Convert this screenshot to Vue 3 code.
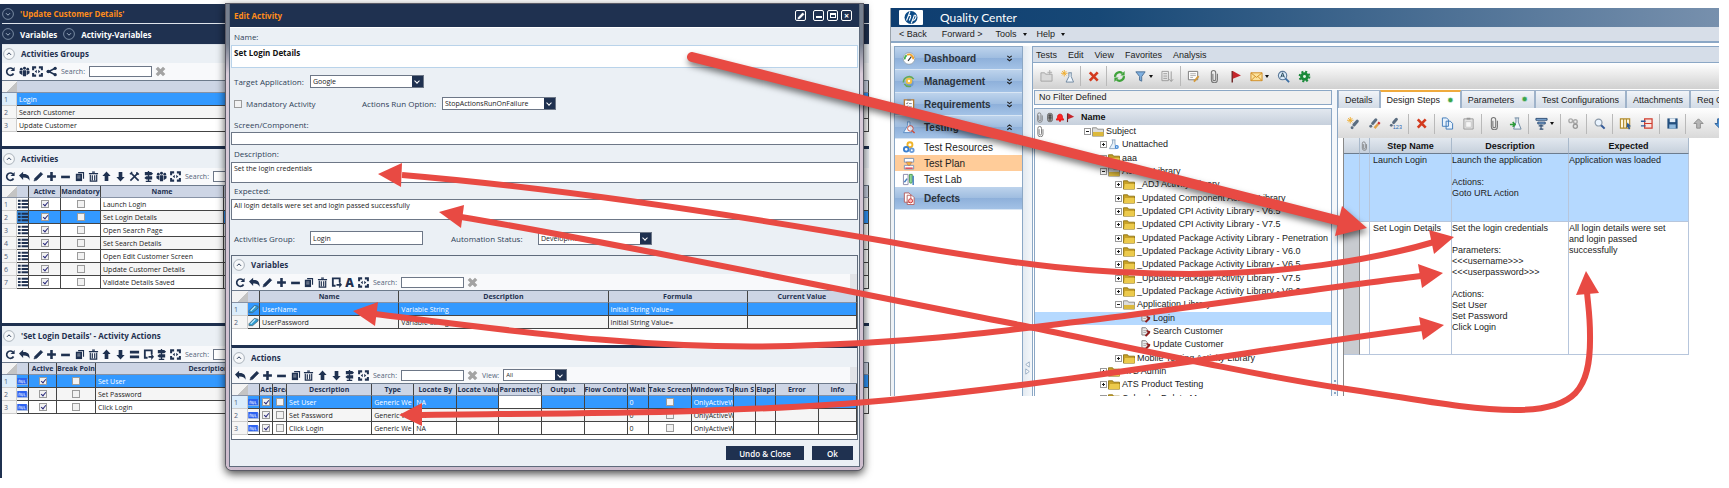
<script setup>
const groups = ['Login', 'Search Customer', 'Update Customer']
const activities = [
  'Launch Login', 'Set Login Details', 'Open Search Page', 'Set Search Details',
  'Open Edit Customer Screen', 'Update Customer Details', 'Validate Details Saved'
]
const steps = ['Set User', 'Set Password', 'Click Login']
const variables = ['UserName', 'UserPassword']

const groupTools = ['refresh', 'group', 'expand', 'share']
const activityTools = ['refresh', 'undo', 'pencil', 'plus', 'minus', 'copy', 'trash', 'up', 'down', 'tools', 'sign', 'group', 'expand']
const stepTools = ['refresh', 'undo', 'pencil', 'plus', 'minus', 'copy', 'trash', 'up', 'down', 'equals', 'export', 'sign', 'expand']
const variableTools = ['refresh', 'undo', 'pencil', 'plus', 'minus', 'copy', 'trash', 'export', 'letter', 'expand']
const actionTools = ['undo', 'pencil', 'plus', 'minus', 'copy', 'trash', 'up', 'down', 'sign', 'expand']

const variableCols = [16, 12, 139, 209, 139, 109]
const actionCols = [16, 12, 13, 14, 85, 42, 43, 42, 43, 42, 43, 21, 43, 42, 22, 20, 43, 38]
const actionHeads = ['Description', 'Type', 'Locate By', 'Locate Valu', 'Parameter(s', 'Output', 'Flow Contro', 'Wait', 'Take Screen', 'Windows To', 'Run S', 'Elaps', 'Error', 'Info']

const nav = [
  { name: 'Dashboard', icon: 'gauge', head: true, mark: 'down' },
  { name: 'Management', icon: 'manage', head: true, mark: 'down' },
  { name: 'Requirements', icon: 'clipboard', head: true, mark: 'down' },
  { name: 'Testing', icon: 'flask', head: true, mark: 'up' },
  { name: 'Test Resources', icon: 'resources' },
  { name: 'Test Plan', icon: 'plan', current: true },
  { name: 'Test Lab', icon: 'lab' },
  { name: 'Defects', icon: 'defects', head: true }
]

const tree = [
  { t: 'Subject', l: 0, open: true, clip: true },
  { t: 'Unattached', l: 1, icon: 'beaker' },
  { t: 'aaa', l: 1 },
  { t: 'Activity Library', l: 1, open: true },
  { t: '_ADJ Activity Library', l: 2 },
  { t: '_Updated Component Activity Library', l: 2 },
  { t: '_Updated CPI Activity Library - V6.5', l: 2 },
  { t: '_Updated CPI Activity Library - V7.5', l: 2 },
  { t: '_Updated Package Activity Library - Penetration', l: 2 },
  { t: '_Updated Package Activity Library - V6.0', l: 2 },
  { t: '_Updated Package Activity Library - V6.5', l: 2 },
  { t: '_Updated Package Activity Library - V7.5', l: 2 },
  { t: '_Updated Package Activity Library - V8.0', l: 2 },
  { t: 'Application Library', l: 2, open: true },
  { t: 'Login', l: 3, leaf: true, sel: true },
  { t: 'Search Customer', l: 3, leaf: true },
  { t: 'Update Customer', l: 3, leaf: true },
  { t: 'Mobile Testing Activity Library', l: 2 },
  { t: 'ATS Admin', l: 1 },
  { t: 'ATS Product Testing', l: 1 },
  { t: 'Calendar Delete Me', l: 1 }
]

const mainTools = ['newfolder', 'newtest', '|', 'cross', '|', 'sync', 'funnel', 'caret', 'sort', '|', 'note', 'clip', 'flag', 'mail', 'caret', 'find', 'gear']
const stepBar = ['stepnew', 'stepedit', 'steprenum', '|', 'cross', '|', 'pages', 'paste', '|', 'clip', 'addtest', '|', 'params', 'caret', '|', 'links', '|', 'lens', '|', 'columns', 'indent', '|', 'save', '|', 'arrowup', 'arrowdn']
const tabs = [
  { t: 'Details' }, { t: 'Design Steps', star: true, on: true }, { t: 'Parameters', star: true },
  { t: 'Test Configurations' }, { t: 'Attachments' }, { t: 'Req Coverage' }
]

const arrows = [
  { d: 'M402 175C545 187 700 209 890 242C1020 266 1100 274 1190 274S1370 261 1434 242', heads: ['378,174 402,163 401,187', '1454,237 1429,230 1434,254'] },
  { d: 'M375 314C520 332 650 350 790 346S1000 331 1100 319C1200 306 1330 287 1421 276', heads: ['353,311 378,302 375,326', '1443,273 1418,264 1422,288'] },
  { d: 'M461 217C600 240 800 282 1020 325C1150 352 1250 374 1340 388C1420 400 1470 410 1515 410C1575 410 1591 390 1590 335C1590 315 1588 305 1587 292', heads: ['439,212 464,205 461,228', '1586,271 1576,295 1599,293'] },
  { d: 'M421 415C560 413 740 414 890 400C1080 381 1250 351 1422 328', heads: ['399,415 422,403 422,426', '1444,325 1419,317 1423,340'] }
]
</script>

<template>
  <div class="page">
    <svg class="sprite" aria-hidden="true">
      <symbol id="refresh" viewBox="0 0 12 12"><path d="M9.3 8.2A4 4 0 1 1 8.6 3.3" fill="none" stroke="currentColor" stroke-width="1.8" /><path d="M10.5 1v4.5H6z" fill="currentColor" /></symbol>
      <symbol id="undo" viewBox="0 0 12 12"><path d="M0 5L4.500 .8v2.400C9 2.800 12 5 11.500 10.500 10.300 8 8 7 4.500 7.200v2.600z" fill="currentColor" /></symbol>
      <symbol id="pencil" viewBox="0 0 12 12"><path d="M1 11l1-3.2L8.5 1.3l2.200 2.200L4.200 10z" fill="currentColor" stroke="currentColor" stroke-width=".5" /></symbol>
      <symbol id="plus" viewBox="0 0 12 12"><path d="M6 1.2v9.600M1.200 6h9.600" stroke="currentColor" stroke-width="2.800" /></symbol>
      <symbol id="minus" viewBox="0 0 12 12"><path d="M1.200 6.500h9.600" stroke="currentColor" stroke-width="2.800" /></symbol>
      <symbol id="copy" viewBox="0 0 12 12"><path d="M4.5 1H11v7.5H9.800V2.500H4.500z" fill="currentColor" /><path d="M2 3h6.800v8H2z" fill="currentColor" /><path d="M3.500 5.500h3.500M3.500 7.500h3.500" stroke="#fff" stroke-width=".6" /></symbol>
      <symbol id="trash" viewBox="0 0 12 12"><path d="M1 2.800h10M4.500 1.200h3M2.500 4v7h7V4M4.700 4.500v5.500M7.300 4.500v5.500" fill="none" stroke="currentColor" stroke-width="1.300" /></symbol>
      <symbol id="up" viewBox="0 0 12 12"><path d="M6 .5l4.500 5H8V11H4V5.500H1.500z" fill="currentColor" /></symbol>
      <symbol id="down" viewBox="0 0 12 12"><path d="M6 11.500L1.500 6.500H4V1h4v5.500h2.500z" fill="currentColor" /></symbol>
      <symbol id="tools" viewBox="0 0 12 12"><path d="M2 2l8.500 8.500M10 2l-8.500 8.500" stroke="currentColor" stroke-width="1.700" /><path d="M1 3.500L3.500 1M8.500 1v2.500H11" fill="none" stroke="currentColor" stroke-width="1.300" /></symbol>
      <symbol id="sign" viewBox="0 0 12 12"><path d="M6 0v12" stroke="currentColor" stroke-width="1.500" /><path d="M2 1.200h7l2 1.700-2 1.700H2zM10 5.800H3.500l-2 1.700 2 1.700H10zM3 10.500h6V12H3z" fill="currentColor" /></symbol>
      <symbol id="group" viewBox="0 0 12 12"><circle cx="6" cy="2.500" r="1.600" fill="currentColor" /><circle cx="2.500" cy="3.500" r="1.500" fill="currentColor" /><circle cx="9.500" cy="3.500" r="1.500" fill="currentColor" /><path d="M4.300 4.500h3.400v6.800H4.300zM.5 5.200h3.200V10L.5 8zM11.500 5.200H8.300V10l3.200-2z" fill="currentColor" /></symbol>
      <symbol id="expand" viewBox="0 0 12 12"><path d="M1.200 4.500V1.500h3.300M7.500 1.500h3.300v3M10.800 7.500v3H7.500M4.500 10.500H1.200v-3" fill="none" stroke="currentColor" stroke-width="2.200" /><path d="M3 6l2.200-2v4zM9 6L6.800 4v4z" fill="currentColor" /></symbol>
      <symbol id="share" viewBox="0 0 12 12"><path d="M10 2.500L3 6l7 3.500" fill="none" stroke="currentColor" stroke-width="1.700" /><circle cx="10" cy="2.500" r="1.800" fill="currentColor" /><circle cx="2.500" cy="6" r="2" fill="currentColor" /><circle cx="10" cy="9.500" r="1.800" fill="currentColor" /></symbol>
      <symbol id="equals" viewBox="0 0 12 12"><path d="M1 3.500h10M1 8.500h10" stroke="currentColor" stroke-width="3" /></symbol>
      <symbol id="export" viewBox="0 0 12 12"><path d="M5 9.500H2v-8h7.500V6" fill="none" stroke="currentColor" stroke-width="2" /><path d="M6 7.500h3V5l3 3.500L9 12V9.500H6z" fill="currentColor" /></symbol>
      <symbol id="letter" viewBox="0 0 12 12"><text x="6" y="11" text-anchor="middle" font-size="13" font-weight="900" fill="currentColor">A</text></symbol>
      <symbol id="wipe" viewBox="0 0 12 12"><path d="M2 2l8 8M10 2l-8 8" stroke="#a3a3a3" stroke-width="3.600" /></symbol>
      <symbol id="chev" viewBox="0 0 12 12"><circle cx="6" cy="6" r="5.400" fill="none" stroke="currentColor" stroke-width=".7" /><path d="M4 5.200l2 2 2-2" fill="none" stroke="currentColor" /></symbol>
      <symbol id="chevup" viewBox="0 0 12 12"><circle cx="6" cy="6" r="5.400" fill="#f6f8fa" stroke="#9aa3ad" stroke-width=".8" /><path d="M4 6.800l2-2 2 2" fill="none" stroke="#1f3150" /></symbol>
      <symbol id="list" viewBox="0 0 12 10"><path d="M1 1.500h3M5 1.500h7M1 5h3M5 5h7M1 8.500h3M5 8.500h7" stroke="#1f3150" stroke-width="2.200" /></symbol>
      <symbol id="tag" viewBox="0 0 12 10"><path d="M1 7l6-6 4 1v2L5 9H1z" fill="#2f9bd0" stroke="#4a5a66" stroke-width=".7" /><path d="M3 7l5-5" stroke="#c8efff" stroke-width="1.200" /></symbol>
      <symbol id="abl" viewBox="0 0 12 8"><path d="M0 0h11v7H0z" fill="#2d62f0" /><path d="M2 5.500V2.500h1.500v3M5 2.500v3h1.500v-3M8 2.500v3h1.500" fill="none" stroke="#dfe8ff" stroke-width=".8" /><path d="M0 7.500h12V1" fill="none" stroke="#9ab0dd" /></symbol>

      <symbol id="gauge" viewBox="0 0 14 14"><circle cx="7" cy="7" r="6.300" fill="#fff" stroke="#94a2ae" /><path d="M2.500 8a4.500 4.500 0 0 1 2-4.500" fill="none" stroke="#41ad4a" stroke-width="1.800" /><path d="M5 3.200a4.500 4.500 0 0 1 6.500 4.600" fill="none" stroke="#f0a22a" stroke-width="1.800" /><path d="M6 9.500L9.500 5" stroke="#333" stroke-width="1.200" /></symbol>
      <symbol id="manage" viewBox="0 0 14 14"><circle cx="8" cy="8.500" r="4" fill="#6f9bd0" /><circle cx="7" cy="6.500" r="3.500" fill="#f4c043" /><path d="M1 8a6 6 0 0 1 11-3.500M2 9.500a6 6 0 0 0 7 2.500" fill="none" stroke="#65a955" stroke-width="1.700" /><circle cx="7" cy="6.500" r="1.300" fill="#fff" /></symbol>
      <symbol id="clipboard" viewBox="0 0 14 14"><path d="M2 2h10v11.500H2z" fill="#fff" stroke="#b77b32" stroke-width="1.400" /><path d="M5 1h4v2H5z" fill="#888" /><path d="M4 5.500l1 1 1-2M7 6h3M4 9l1 1 1-2M7 9.500h3" fill="none" stroke="#667" stroke-width=".8" /></symbol>
      <symbol id="flask" viewBox="0 0 14 14"><path d="M5 1h3M5.500 1v4L1 12.500h9L8 5V1" fill="#e9f4ff" stroke="#5b8cc4" /><circle cx="8.500" cy="8" r="3" fill="#fff" fill-opacity=".7" stroke="#cc4a3a" /><path d="M10.500 10.500l2.500 2.500" stroke="#cc4a3a" stroke-width="1.500" /></symbol>
      <symbol id="resources" viewBox="0 0 14 14"><circle cx="8" cy="4" r="2.700" fill="none" stroke="#f0b429" stroke-width="2" /><circle cx="4" cy="9" r="2.500" fill="none" stroke="#3a7fd0" stroke-width="2" /><circle cx="10" cy="10" r="2" fill="none" stroke="#6a9bd8" stroke-width="2" /></symbol>
      <symbol id="plan" viewBox="0 0 14 14"><path d="M2 1.500h10v4H2zM2 9h10v4H2z" fill="#fff" stroke="#7a93b5" /><path d="M4 5.500h6L8 9H6z" fill="#f2b63c" stroke="#a66" stroke-width=".6" /><path d="M3 12h8" stroke="#d34" stroke-width="1.400" /></symbol>
      <symbol id="lab" viewBox="0 0 14 14"><path d="M1 1.500h5v11H1z" fill="#fff" stroke="#88a" /><path d="M7.500 1.500h3v8a1.500 1.500 0 0 1-3 0z" fill="#8fd694" stroke="#4a9b52" /><path d="M2 10l3-4M11.500 3v10" stroke="#477fc2" stroke-width="1.600" /></symbol>
      <symbol id="defects" viewBox="0 0 14 14"><path d="M2 1h5l2 2v8H2zM5 3.500h5l2.500 2.500v7.500H5z" fill="#fff" stroke="#b65f5f" /><circle cx="8.700" cy="9.500" r="2.200" fill="#fbb" stroke="#c33" /></symbol>
      <symbol id="ddown" viewBox="0 0 8 8"><path d="M1.500 1l2.500 2 2.500-2M1.500 4.500l2.500 2 2.500-2" fill="none" stroke="#222" stroke-width="1.300" /></symbol>
      <symbol id="dup" viewBox="0 0 8 8"><path d="M1.500 3l2.500-2 2.500 2M1.500 6.500l2.500-2 2.500 2" fill="none" stroke="#222" stroke-width="1.300" /></symbol>

      <symbol id="folder" viewBox="0 0 13 11"><path d="M.5 1.500h4.500l1 1.500h6.500v7.500H.5z" fill="#c9a227" stroke="#8f7415" /><path d="M2 5h10.500v5.500H1z" fill="#ecca4c" /></symbol>
      <symbol id="openfolder" viewBox="0 0 13 11"><path d="M.5 1.500h4.500l1 1.500h6.500v7.500H.5z" fill="#ddd" stroke="#8a8a86" /><path d="M1 6h11.500v4.500H1z" fill="#dcb93c" /></symbol>
      <symbol id="beaker" viewBox="0 0 13 11"><path d="M4 .5h4M5 .5V4L1.500 10h7L7.500 4V.5" fill="#e8f2fb" stroke="#8aa4bd" /><circle cx="9.500" cy="8.300" r="2.200" fill="#3d86d8" /><circle cx="9.500" cy="8.300" r=".8" fill="#fff" /></symbol>
      <symbol id="test" viewBox="0 0 11 11"><path d="M1 .8h4l2 2v6H1z" fill="#eee" stroke="#777" /><path d="M2.500 4h3M2.500 6h3" stroke="#888" stroke-width=".7" /><path d="M5 10l4.500-4.500" stroke="#8c1c1c" stroke-width="2.200" /><path d="M6 4l4 1.500" stroke="#8c1c1c" stroke-width="1.500" /></symbol>
      <symbol id="clip" viewBox="0 0 12 12"><path d="M4.500 3.500V8.500a1.200 1.200 0 0 0 2.600 0V2.500a2 2 0 0 0-4 0V9a2.800 2.800 0 0 0 5.600 0V3.500" fill="none" stroke="#777" stroke-width="1" /></symbol>
      <symbol id="flag" viewBox="0 0 12 12"><path d="M3 1v10.500" stroke="#6a2222" stroke-width="1.300" /><path d="M3.500 1L11 5 3.500 8z" fill="#c4252b" /></symbol>
      <symbol id="bell" viewBox="0 0 12 12"><path d="M6 2c2.500 0 3 2 3 4l1.500 3h-9L3 6c0-2 .5-4 3-4z" fill="#f22" stroke="#d11" /><circle cx="6" cy="10" r="1.300" fill="#e11" /></symbol>
      <symbol id="db" viewBox="0 0 12 12"><rect x="3" y="1" width="6" height="10" rx="2.500" fill="#999" stroke="#666" /><path d="M4 4h4M4 6.500h4M6 2v8" stroke="#333" /></symbol>

      <symbol id="newfolder" viewBox="0 0 14 14"><path d="M1 3h4l1 1.500h7V12H1z" fill="#d9d9d9" stroke="#a4a4a4" /><path d="M10.500 0v5M8 2.500h5" stroke="#aaa" /></symbol>
      <symbol id="newtest" viewBox="0 0 14 14"><path d="M8 3h3.500M8.500 3v4L5.500 13h8L11 7V3" fill="#eef5fc" stroke="#6d87a0" /><path d="M3.500 0v7M0 3.500h7M1.200 1.200l4.600 4.600M5.800 1.200L1.200 5.800" stroke="#f0ad2e" /></symbol>
      <symbol id="cross" viewBox="0 0 14 14"><path d="M3 2.500l8.500 9M11.500 2.500l-8.500 9" stroke="#d33a1e" stroke-width="2.800" /></symbol>
      <symbol id="sync" viewBox="0 0 14 14"><path d="M2.300 7.500a4.700 4.700 0 0 1 7.700-4M11.700 6.500a4.700 4.700 0 0 1-7.700 4" fill="none" stroke="#3fa33b" stroke-width="2.400" /><path d="M12.500 1v5H8zM1.500 13V8H6z" fill="#3fa33b" /></symbol>
      <symbol id="funnel" viewBox="0 0 14 14"><path d="M2 2h10L8.300 7v5L6 11V7z" fill="#7fb0e0" stroke="#4b6f95" /></symbol>
      <symbol id="sort" viewBox="0 0 14 14"><path d="M1 1.500h7v10H1zM2.500 4h4M2.500 6.500h4M2.500 9h4M11 1.500V12M9 10l2 2.500 2-2.500" fill="none" stroke="#999" /></symbol>
      <symbol id="note" viewBox="0 0 14 14"><path d="M1.500 1.500h10v9h-10z" fill="#fdfdfd" stroke="#777" /><path d="M3.500 4h6M3.500 6h6M3.500 8h3" stroke="#999" stroke-width=".8" /><path d="M7.500 12.500l5-6" stroke="#d49a3b" stroke-width="2" /></symbol>
      <symbol id="mail" viewBox="0 0 14 14"><path d="M1 3h12v8.500H1z" fill="#fce29b" stroke="#cf8a22" /><path d="M1 3l6 5 6-5M1 11.500l4.500-4.500M13 11.500L8.500 7" fill="none" stroke="#cf8a22" /></symbol>
      <symbol id="find" viewBox="0 0 14 14"><circle cx="6" cy="6" r="4.500" fill="#dcecfb" stroke="#5d7a99" stroke-width="1.200" /><path d="M9 9l4 4" stroke="#3a6ea5" stroke-width="2" /><path d="M4 8l2-5 2 5M4.500 6.500h3" fill="none" stroke="#245" /></symbol>
      <symbol id="gear" viewBox="0 0 14 14"><circle cx="7" cy="7" r="4.700" fill="#1b8a3a" /><circle cx="7" cy="7" r="5.200" fill="none" stroke="#1b8a3a" stroke-width="2.200" stroke-dasharray="2.100 2" /><circle cx="7" cy="7" r="1.600" fill="#e5f5e8" /></symbol>
      <symbol id="stepnew" viewBox="0 0 14 14"><path d="M3.500 0v7M0 3.500h7M1.200 1.200l4.600 4.600M5.800 1.200L1.200 5.800" stroke="#f0ad2e" /><path d="M7.500 8.500l3.500-4" stroke="#5b6d80" stroke-width="3.400" stroke-linecap="round" /><circle cx="5.500" cy="11.500" r="1.600" fill="#5b6d80" /></symbol>
      <symbol id="stepedit" viewBox="0 0 14 14"><path d="M5 7l3.500-4" stroke="#5b6d80" stroke-width="3.200" stroke-linecap="round" /><circle cx="3" cy="10" r="1.600" fill="#5b6d80" /><path d="M7 12l4-4.500" stroke="#e0a24a" stroke-width="2.600" /><path d="M11 7.500l1.500-1.800" stroke="#c33" stroke-width="2.600" /></symbol>
      <symbol id="steprenum" viewBox="0 0 14 14"><path d="M5 6l3-3.500" stroke="#5b6d80" stroke-width="3.200" stroke-linecap="round" /><circle cx="2.500" cy="9" r="1.500" fill="#5b6d80" /><text x="4" y="13" font-size="6" fill="#2a6cb8">123</text></symbol>
      <symbol id="pages" viewBox="0 0 14 14"><path d="M1.500 1h4.500l2 2v7H1.500zM5.500 4.500H10l2.500 2.500v6h-7z" fill="#e8f2fc" stroke="#3c78b8" /></symbol>
      <symbol id="paste" viewBox="0 0 14 14"><path d="M2 2h10v11H2z" fill="#e4e4e4" stroke="#999" /><path d="M5 .8h4v2H5z" fill="#999" /><path d="M4 5h6v6H4z" fill="#f6f6f6" stroke="#b5b5b5" stroke-width=".6" /></symbol>
      <symbol id="addtest" viewBox="0 0 14 14"><path d="M6 1h5M7.500 1v4.500L5 13h8L10 5.500V1" fill="#eef5fc" stroke="#6d87a0" /><path d="M1 8h5M4 5.500L6.500 8 4 10.500" fill="none" stroke="#2c9c3a" stroke-width="1.700" /></symbol>
      <symbol id="params" viewBox="0 0 14 14"><path d="M1 1.500h12v2H1zM3 5.500h8v2H3z" fill="#8ab6e4" stroke="#2a4a70" /><path d="M4 9.500h5M6.500 8v5.500M5 13h4" stroke="#2a4a70" stroke-width="1.200" /></symbol>
      <symbol id="links" viewBox="0 0 14 14"><circle cx="4" cy="4" r="2" fill="none" stroke="#aaa" stroke-width="1.500" /><circle cx="9" cy="5" r="2" fill="none" stroke="#aaa" stroke-width="1.500" /><circle cx="9" cy="10" r="2.200" fill="none" stroke="#999" stroke-width="1.500" /></symbol>
      <symbol id="lens" viewBox="0 0 14 14"><circle cx="6" cy="6" r="3.700" fill="#eaf4ff" stroke="#8b99a8" stroke-width="1.300" /><path d="M8.800 8.800l3.700 3.700" stroke="#355b9a" stroke-width="2.200" /></symbol>
      <symbol id="columns" viewBox="0 0 14 14"><path d="M1.500 2h10v10h-10zM5 2v10M8 2v10" fill="#fff8e0" stroke="#b08a2a" stroke-width="1.200" /><path d="M9 6l4 4-2 .3 1 2.700-1.500.4-1-2.500-1.500 1z" fill="#2c5c9e" /></symbol>
      <symbol id="indent" viewBox="0 0 14 14"><path d="M5 2h8v10H5zM5 7h8" fill="#fbe3df" stroke="#cf3b2c" stroke-width="1.300" /><path d="M1 4.500h5M1 9.500h5" stroke="#2a5a9c" stroke-width="1.500" /></symbol>
      <symbol id="save" viewBox="0 0 14 14"><path d="M1.500 1.500h11v11h-11z" fill="#24507f" /><path d="M4 1.500h6v4H4z" fill="#e6eef6" /><path d="M3.500 8h7v4.500h-7z" fill="#8fb9dd" /></symbol>
      <symbol id="arrowup" viewBox="0 0 14 14"><path d="M7 2l5 5H9v5H5V7H2z" fill="#b6b6b6" stroke="#8b8b8b" /></symbol>
      <symbol id="arrowdn" viewBox="0 0 14 14"><path d="M7 12L2 7h3V2h4v5h3z" fill="#4f93d6" stroke="#2d5f96" /></symbol>
    </svg>

    <section class="studio">
      <header class="bar"><svg class="rd"><use href="#chev" /></svg><span class="orange">'Update Customer Details'</span></header>
      <header class="bar second"><svg class="rd"><use href="#chev" /></svg><span>Variables</span><svg class="rd"><use href="#chev" /></svg><span>Activity-Variables</span></header>

      <section class="block b1">
        <h2><svg class="rd"><use href="#chevup" /></svg>Activities Groups</h2>
        <div class="tools">
          <div class="set four"><button v-for="i in groupTools" :key="i" :aria-label="i"><svg><use :href="'#' + i" /></svg></button></div>
          <label>Search: <input type="text"></label><button class="wipe" aria-label="Clear"><svg><use href="#wipe" /></svg></button>
        </div>
        <table class="grid">
          <colgroup><col class="w15"><col></colgroup>
          <thead><tr><th class="corner"></th><th></th></tr></thead>
          <tbody><tr v-for="(g, i) in groups" :key="g" :class="{ sel: i === 0 }"><th class="num">{{ i + 1 }}</th><td>{{ g }}</td></tr></tbody>
        </table>
      </section>

      <section class="block b2">
        <h2><svg class="rd"><use href="#chevup" /></svg>Activities</h2>
        <div class="tools">
          <div class="set thirteen"><button v-for="i in activityTools" :key="i" :aria-label="i"><svg><use :href="'#' + i" /></svg></button></div>
          <label>Search: <input type="text"></label>
        </div>
        <table class="grid">
          <colgroup><col class="w15"><col class="w12"><col class="w32"><col class="w40"><col class="w123"><col></colgroup>
          <thead><tr><th class="corner"></th><th></th><th>Active</th><th>Mandatory</th><th>Name</th><th></th></tr></thead>
          <tbody>
            <tr v-for="(a, i) in activities" :key="a" :class="{ part: i === 1 }">
              <th class="num">{{ i + 1 }}</th><td class="ic"><svg class="li"><use href="#list" /></svg></td>
              <td class="c"><input type="checkbox" checked :aria-label="a + ' active'"></td>
              <td class="c"><input type="checkbox" :aria-label="a + ' mandatory'"></td>
              <td class="plain">{{ a }}</td><td></td>
            </tr>
          </tbody>
        </table>
      </section>

      <section class="block b3">
        <h2><svg class="rd"><use href="#chevup" /></svg>'Set Login Details' - Activity Actions</h2>
        <div class="tools">
          <div class="set thirteen"><button v-for="i in stepTools" :key="i" :aria-label="i"><svg><use :href="'#' + i" /></svg></button></div>
          <label>Search: <input type="text"></label>
        </div>
        <table class="grid">
          <colgroup><col class="w15"><col class="w12"><col class="w28"><col class="w39"><col class="w226"><col></colgroup>
          <thead><tr><th class="corner"></th><th></th><th>Active</th><th>Break Poin</th><th>Description</th><th></th></tr></thead>
          <tbody>
            <tr v-for="(s, i) in steps" :key="s" :class="{ sel: i === 0 }">
              <th class="num">{{ i + 1 }}</th><td class="ic"><svg class="ab"><use href="#abl" /></svg></td>
              <td class="c"><input type="checkbox" checked :aria-label="s + ' active'"></td>
              <td class="c"><input type="checkbox" :aria-label="s + ' break point'"></td>
              <td>{{ s }}</td><td></td>
            </tr>
          </tbody>
        </table>
      </section>

      <div class="dialog" role="dialog" aria-label="Edit Activity">
        <header class="title">
          <span>Edit Activity</span>
          <button class="pin" aria-label="Edit"><svg><use href="#pencil" /></svg></button>
          <button aria-label="Minimize"><i class="mn"></i></button>
          <button aria-label="Maximize"><i class="mx"></i></button>
          <button aria-label="Close">×</button>
        </header>
        <form class="form" @submit.prevent>
          <label class="cap" for="f-name">Name:</label>
          <textarea id="f-name" class="name">Set Login Details</textarea>
          <div class="line l1">
            <label for="f-app">Target Application:</label>
            <span class="combo"><select id="f-app"><option>Google</option></select></span>
          </div>
          <div class="line l2">
            <input id="f-man" type="checkbox"><label class="man" for="f-man">Mandatory Activity</label>
            <label for="f-run" class="runlabel">Actions Run Option:</label>
            <span class="combo"><select id="f-run"><option>StopActionsRunOnFailure</option></select></span>
          </div>
          <label class="cap scr" for="f-scr">Screen/Component:</label>
          <input id="f-scr" class="scrbox" type="text">
          <label class="cap" for="f-desc">Description:</label>
          <textarea id="f-desc">Set the login credentials</textarea>
          <label class="cap exp" for="f-exp">Expected:</label>
          <textarea id="f-exp">All login details were set and login passed successfully</textarea>
          <div class="line l3">
            <label for="f-grp">Activities Group:</label><input id="f-grp" class="grp" type="text" value="Login">
            <label for="f-auto" class="autolabel">Automation Status:</label>
            <span class="combo"><select id="f-auto"><option>Development</option></select></span>
          </div>
        </form>

        <div class="panels">
          <section class="vars">
            <h2><svg class="rd"><use href="#chevup" /></svg>Variables</h2>
            <div class="tools">
              <div class="set ten"><button v-for="i in variableTools" :key="i" :aria-label="i"><svg><use :href="'#' + i" /></svg></button></div>
              <label>Search: <input type="text"></label><button class="wipe" aria-label="Clear"><svg><use href="#wipe" /></svg></button><i class="grip"></i>
            </div>
            <table class="grid">
              <colgroup><col v-for="(w, i) in variableCols" :key="i" :style="{ width: w + 'px' }"></colgroup>
              <thead><tr><th class="corner"></th><th></th><th>Name</th><th>Description</th><th>Formula</th><th>Current Value</th></tr></thead>
              <tbody>
                <tr v-for="(v, i) in variables" :key="v" :class="{ sel: i === 0 }">
                  <th class="num">{{ i + 1 }}</th><td class="ic"><svg class="li"><use href="#tag" /></svg></td>
                  <td>{{ v }}</td><td>Variable String</td><td>Initial String Value=</td><td></td>
                </tr>
              </tbody>
            </table>
          </section>
          <section class="acts">
            <h2><svg class="rd"><use href="#chevup" /></svg>Actions</h2>
            <div class="tools">
              <div class="set ten"><button v-for="i in actionTools" :key="i" :aria-label="i"><svg><use :href="'#' + i" /></svg></button></div>
              <label>Search: <input type="text"></label><button class="wipe" aria-label="Clear"><svg><use href="#wipe" /></svg></button>
              <label class="view">View: <span class="combo short"><select><option>All</option></select></span></label><i class="grip"></i>
            </div>
            <table class="grid tight">
              <colgroup><col v-for="(w, i) in actionCols" :key="i" :style="{ width: w + 'px' }"></colgroup>
              <thead><tr><th class="corner"></th><th></th><th>Act</th><th>Brea</th><th v-for="h in actionHeads" :key="h">{{ h }}</th></tr></thead>
              <tbody>
                <tr v-for="(s, i) in steps" :key="s" :class="{ sel: i === 0 }">
                  <th class="num">{{ i + 1 }}</th><td class="ic"><svg class="ab"><use href="#abl" /></svg></td>
                  <td class="c"><input type="checkbox" checked :aria-label="s + ' active'"></td>
                  <td class="c"><input type="checkbox" :aria-label="s + ' break'"></td>
                  <td>{{ s }}</td><td>Generic We</td><td>NA</td><td></td><td class="plain"></td><td></td><td></td><td>0</td>
                  <td class="c"><input type="checkbox" :aria-label="s + ' screenshot'"></td>
                  <td>OnlyActiveW</td><td></td><td></td><td></td><td></td>
                </tr>
              </tbody>
            </table>
          </section>
        </div>
        <footer class="foot"><button class="undo">Undo &amp; Close</button><button class="ok">Ok</button></footer>
      </div>
    </section>

    <section class="qc">
      <header class="brand">
        <svg class="logo" viewBox="0 0 24 15"><rect width="24" height="15" rx="1" fill="#fff" /><circle cx="12" cy="7.500" r="6.500" fill="#0b4a86" /><path d="M11 1.500L7.500 10.500M9.400 6c1.800-1.300 2.700-.6 2.200 1l-1.300 3.500M15.500 5l-3.300 8.500M14.800 5.500c2.400-1 2.600 1 1.700 2.800-.7 1.700-2 2.500-3.200 1.500" fill="none" stroke="#fff" stroke-width="1.100" /></svg>
        <span>Quality Center</span>
      </header>
      <nav class="topmenu"><a href="#">&lt; Back</a><a href="#" class="fw">Forward &gt;</a><a href="#" class="tl">Tools <i class="tri"></i></a><a href="#">Help <i class="tri"></i></a></nav>
      <div class="body">
        <nav class="side">
          <a v-for="n in nav" :key="n.name" href="#" :class="{ head: n.head, current: n.current }">
            <svg><use :href="'#' + n.icon" /></svg><span>{{ n.name }}</span>
            <svg v-if="n.mark" class="mark"><use :href="n.mark === 'up' ? '#dup' : '#ddown'" /></svg>
          </a>
        </nav>
        <div class="split"><svg viewBox="0 0 8 16"><path d="M6 1v6L2 4zM2 9v6l4-3z" fill="#fff" stroke="#7a95b3" stroke-width=".8" /></svg></div>
        <main class="main">
          <nav class="menu"><a href="#">Tests</a><a href="#">Edit</a><a href="#">View</a><a href="#">Favorites</a><a href="#">Analysis</a></nav>
          <div class="maintools">
            <template v-for="(i, k) in mainTools" :key="k">
              <i v-if="i === '|'" class="sep"></i><i v-else-if="i === 'caret'" class="tri"></i>
              <button v-else :aria-label="i"><svg><use :href="'#' + i" /></svg></button>
            </template>
          </div>
          <div class="cols">
            <section class="treepane">
              <div class="filter">No Filter Defined</div>
              <div class="treebox">
                <div class="treehead"><svg><use href="#clip" /></svg><svg><use href="#db" /></svg><svg><use href="#bell" /></svg><svg><use href="#flag" /></svg><b>Name</b></div>
                <div class="clipper">
                  <ul class="tree">
                    <li v-for="n in tree" :key="n.t" :class="['lv' + n.l, { sel: n.sel }]">
                      <svg v-if="n.clip" class="rowclip"><use href="#clip" /></svg>
                      <i v-if="!n.leaf" class="tog" :class="{ open: n.open }"></i>
                      <svg :class="n.leaf ? 'leaf' : 'fold'"><use :href="n.leaf ? '#test' : n.icon ? '#' + n.icon : n.open ? '#openfolder' : '#folder'" /></svg>
                      <span>{{ n.t }}</span>
                    </li>
                  </ul>
                </div>
              </div>
            </section>
            <div class="dots"><i v-for="n in 4" :key="n"></i></div>
            <section class="detail">
              <div class="tabs"><button v-for="t in tabs" :key="t.t" :class="{ on: t.on }">{{ t.t }}<em v-if="t.star">✹</em></button></div>
              <div class="steptools">
                <template v-for="(i, k) in stepBar" :key="k">
                  <i v-if="i === '|'" class="sep"></i><i v-else-if="i === 'caret'" class="tri"></i>
                  <button v-else :aria-label="i"><svg><use :href="'#' + i" /></svg></button>
                </template>
              </div>
              <div class="stepwrap">
                <table class="steps">
                  <colgroup><col class="s1"><col class="s2"><col class="s3"><col class="s4"><col class="s5"></colgroup>
                  <thead><tr><th></th><th><svg class="hclip"><use href="#clip" /></svg></th><th>Step Name</th><th>Description</th><th>Expected</th></tr></thead>
                  <tbody>
                    <tr class="first"><td></td><td></td><td>Launch Login</td><td>Launch the application<br><br>Actions:<br>Goto URL Action</td><td>Application was loaded</td></tr>
                    <tr class="next"><td></td><td></td><td>Set Login Details</td><td>Set the login credentials<br><br>Parameters:<br>&lt;&lt;&lt;username&gt;&gt;&gt;<br>&lt;&lt;&lt;userpassword&gt;&gt;&gt;<br><br>Actions:<br>Set User<br>Set Password<br>Click Login</td><td>All login details were set<br>and login passed<br>successfully</td></tr>
                  </tbody>
                </table>
              </div>
            </section>
          </div>
        </main>
      </div>
    </section>

    <svg class="arrows" viewBox="0 0 1729 488" aria-hidden="true">
      <g fill="none" stroke="#e84a43" stroke-width="6"><path v-for="a in arrows" :key="a.d" :d="a.d" /></g>
      <g fill="#e84a43"><template v-for="a in arrows" :key="a.d"><polygon v-for="h in a.heads" :key="h" :points="h" /></template></g>
      <g class="big"><path d="M692 57L1344 222" stroke="#e84a43" stroke-width="10" stroke-linecap="round" /><polygon points="1367,228 1342,206 1335,236" fill="#e84a43" /></g>
    </svg>
  </div>
</template>

<style>
body { background: #fff; }
</style>

<style scoped>
* { box-sizing: border-box; }
.page { position: relative; display: grid; grid-template-columns: minmax(0, 869fr) minmax(0, 829fr); column-gap: 21px; padding: 4px 10px 10px 0; align-items: start; overflow: hidden; font-family: "Open Sans", "Noto Sans", sans-serif; font-size: 7px; color: #222; }
.sprite { display: none; }
button { padding: 0; border: 0; background: none; font: inherit; color: inherit; display: flex; align-items: center; justify-content: center; }
input, textarea, select { font: inherit; color: inherit; margin: 0; padding: 0 2px; border: 1px solid #6d7787; background: #fff; border-radius: 0; outline: 0; }
textarea { display: block; width: 100%; resize: none; overflow: hidden; }
select { appearance: none; width: 100%; height: 100%; padding: 0 2px; }
a { color: inherit; text-decoration: none; }
h2 { margin: 0; display: flex; align-items: center; gap: 6px; height: 18px; padding-left: 1px; font-size: 8px; line-height: 12px; font-weight: 700; color: #1f3150; background: #ebf0f5; white-space: nowrap; }
.rd { width: 12px; height: 12px; flex: none; }
input[type="checkbox"] { appearance: none; position: relative; display: block; width: 8px; height: 8px; padding: 0; border: 1px solid #9b9b9b; background: #f2f2f2; flex: none; }
input[type="checkbox"]:checked::after { content: ""; position: absolute; left: 2px; top: 0; width: 2px; height: 4px; border: solid #2b2b7c; border-width: 0 1px 1px 0; transform: rotate(40deg); }

.studio { position: relative; border-left: 2px solid #1f3150; }
.bar { display: flex; align-items: center; gap: 6px; height: 20px; background: #1f3150; color: #fff; font-size: 8px; font-weight: 700; border-bottom: 1px solid #dfe5ec; }
.bar .rd { color: #9fb0c4; }
.orange { color: #ff8c1a; }
.second { height: 21px; }
.block { background: #fff; border-bottom: 3px solid #1f3150; }
.b1 { height: 104px; }
.b2 { height: 177px; }
.b2 h2 { height: 19px; }
.b3 { height: 152px; border-bottom: 0; }
.b3 h2 { height: 20px; }
.tools { display: flex; align-items: center; height: 18px; padding-left: 3px; background: #f8f9fb; border-bottom: 1px solid #6d7a8c; color: #1f3150; }
.b3 .tools, .panels .tools { height: 17px; }
.tools button, .tools svg { width: 11px; height: 11px; }
.tools svg { display: block; }
.tools label { display: flex; align-items: center; gap: 4px; margin-left: 4px; color: #52627a; font-size: 7px; }
.tools input { width: 63px; height: 11px; }
.set { display: flex; justify-content: space-between; }
.four { width: 52px; }
.thirteen { width: 176px; }
.ten { width: 134px; }
.tools .wipe { margin-left: 3px; }

.grid { width: 100%; table-layout: fixed; border-collapse: separate; border-spacing: 0; }
.grid tr { height: 13px; }
.grid thead tr { height: 12px; }
.grid th, .grid td { padding: 0 0 0 2px; border-right: 1px solid #444; border-bottom: 1px solid #444; line-height: 11px; white-space: nowrap; overflow: hidden; font-size: 7px; }
.grid td { background: #fff; color: #222; }
.grid tbody tr:nth-child(even) td { background: #f5f5f5; }
.grid thead th { background: #cdd5e5; color: #1f3150; font-weight: 700; border-bottom-color: #8792a5; text-align: center; padding: 0; }
.grid thead th.corner { background: linear-gradient(135deg, #f3f3f3 60%, #c4c4c4 60%); border-right: 0; }
.grid th.num { background: #f5f5f5; color: #52627a; font-weight: 400; text-align: left; padding-left: 2px; border-color: #ccc; }
.grid td.ic { padding: 0; }
.grid td.ic svg { display: block; width: 11px; height: 10px; }
.grid td.ic svg.ab { height: 7px; }
.grid td.c { padding: 0; }
.grid td.c input { margin: 0 auto; }
.grid tr.sel td { background: #3399ff; color: #fff; }
.grid tbody tr.part td.c, .grid tbody tr.part td:last-child { background: #3399ff; }
.grid tbody tr.part td.ic { background: #3f8fe0; }
.grid tr.sel td.plain { background: #fff; }
.grid tr.sel .num { background: #dcedfb; }
.w15 { width: 15px; } .w12 { width: 12px; } .w32 { width: 32px; } .w40 { width: 40px; } .w123 { width: 123px; }
.w28 { width: 28px; } .w39 { width: 39px; } .w226 { width: 226px; }

.dialog { position: absolute; left: 224px; right: 6px; top: 0; padding: 0 4px 4px; background: linear-gradient(#77808f 40px, #d9cbd9 70px, #cdbccd); border-radius: 0 0 6px 6px; box-shadow: 0 0 0 1px #5b5b66, 0 3px 8px 1px rgba(0, 0, 0, .7); }
.dialog::after { content: ""; position: absolute; inset: 0 3px 3px; border: 1px solid #5f6b7c; border-top: 0; pointer-events: none; }
.title { display: flex; align-items: center; gap: 3px; height: 24px; padding: 0 7px 0 4px; background: #1f3150; color: #fff; font-size: 8px; font-weight: 700; border-bottom: 1px solid #fff; }
.title span { flex: 1; color: #ff8c1a; }
.title button { width: 11px; height: 11px; border: 1px solid #fff; border-radius: 2px; font-size: 9px; line-height: 8px; }
.title .pin { margin-right: 4px; }
.title svg { width: 8px; height: 8px; }
.mn { width: 6px; height: 5px; border-bottom: 2px solid #fff; }
.mx { width: 6px; height: 5px; border: 2px solid #fff; border-width: 2px 1px 1px; }
.form { display: flex; flex-direction: column; padding: 0 1px; background: #ebf0f5; color: #2f3f58; font-size: 8px; }
.form textarea, .form select, .form input { font-size: 7px; color: #222; }
.cap { height: 17px; line-height: 17px; padding-left: 3px; }
.cap.scr { height: 14px; line-height: 14px; margin-top: 8px; }
.cap.exp { height: 16px; line-height: 16px; }
.form textarea { height: 21px; line-height: 11px; padding: 0 2px; }
.form .name { height: 23px; border-color: #b9d3ea; font-size: 8px; font-weight: 700; color: #111; line-height: 13px; }
.scrbox { height: 13px; }
.line { display: flex; align-items: center; height: 13px; padding-left: 3px; }
.l1 { margin-top: 7px; }
.l2 { margin-top: 9px; }
.l3 { margin-top: 11px; height: 14px; }
.line > label { width: 76px; white-space: nowrap; }
.line .man { width: auto; margin-left: 4px; flex: 0 0 116px; }
.line .runlabel { width: 80px; }
.line .grp { width: 113px; height: 14px; }
.line .autolabel { width: 87px; margin-left: 28px; }
.combo { position: relative; display: block; width: 114px; height: 13px; }
.combo::after { content: ""; position: absolute; right: 1px; top: 1px; bottom: 1px; width: 11px; background: #1f3150; pointer-events: none; }
.combo::before { content: ""; position: absolute; z-index: 1; right: 5px; top: 4px; width: 3px; height: 3px; border: solid #fff; border-width: 0 1px 1px 0; transform: rotate(45deg); pointer-events: none; }
.combo.short { width: 64px; height: 12px; font-size: 6px; color: #222; }
.panels { padding: 10px 1px 0; background: #ebf0f5; }
.panels section { border: 1px solid #5f6b7c; background: #fff; }
.panels .vars { height: 90px; border-bottom: 0; }
.panels .acts { height: 95px; border-top: 3px solid #1f3150; }
.acts h2 { height: 19px; }
.grip { width: 7px; height: 16px; margin-left: auto; background: #e2e4e8; }
.foot { display: flex; justify-content: flex-end; gap: 8px; padding: 6px 6px 6px; background: #ebf0f5; font-size: 8px; font-weight: 600; color: #fff; }
.foot button { height: 14px; background: #1f3150; }
.undo { width: 78px; }
.ok { width: 41px; }

.qc { margin-top: 4px; min-width: 0; border-left: 1px solid #9aa2aa; font-family: "Liberation Sans", Arial, sans-serif; font-size: 9px; color: #222; background: #fff; }
.brand { display: flex; align-items: center; gap: 17px; height: 19px; padding-left: 8px; background: linear-gradient(90deg, #0e3d70, #174876 25%, #7790ad); color: #fff; font: 12px/16px Lato, sans-serif; }
.logo { width: 24px; height: 15px; }
.topmenu { display: flex; align-items: center; height: 16px; padding-left: 8px; background: #d7dee8; border-bottom: 2px solid #8ba7c5; }
.topmenu a { display: flex; align-items: center; margin-right: 12px; }
.topmenu .fw { margin-left: 3px; margin-right: 13px; }
.topmenu .tl { margin-right: 10px; }
.tri { display: inline-block; flex: none; border: solid transparent; border-width: 3px 2px 0; border-top-color: #111; }
.topmenu .tri { margin-left: 6px; }
.body { display: flex; margin-top: 3px; height: 350px; padding-left: 3px; background: #eef2f6; overflow: hidden; }
.side { width: 129px; flex: none; border: 1px solid #8ba7c5; border-bottom: 0; background: #fff; }
.side a { display: flex; align-items: center; height: 16px; padding: 0 9px 0 7px; gap: 8px; font-size: 10px; }
.side span { flex: 1; }
.side svg { width: 14px; height: 13px; }
.side .head { height: 23px; font-weight: 700; background: linear-gradient(#bdd3ec, #9fbde0 50%, #8eb0da 51%, #a3c2e6); border-bottom: 1px solid #d9e6f4; color: #2b333c; }
.side .current { background: #ffcc99; }
.side .mark { width: 7px; height: 7px; }
.split { width: 9px; flex: none; display: flex; align-items: flex-end; justify-content: center; padding-bottom: 20px; background: linear-gradient(90deg, #e3eaf1, #f5f8fb); }
.split svg { width: 7px; height: 16px; }
.main { flex: 1; min-width: 0; display: flex; flex-direction: column; border-left: 1px solid #8ba7c5; border-top: 1px solid #8ba7c5; background: #fff; }
.menu { display: flex; align-items: center; gap: 11px; height: 16px; flex: none; padding-left: 3px; background: #d5dde8; border-bottom: 1px solid #8ba7c5; }
.maintools { display: flex; align-items: center; height: 26px; flex: none; gap: 8px; padding-left: 7px; background: linear-gradient(#fff, #d0d0d0); }
.maintools svg, .steptools svg { width: 13px; height: 13px; display: block; }
.maintools .tri, .steptools .tri { margin-left: -6px; }
.sep { width: 1px; height: 20px; flex: none; background: #b9b9b9; margin: 0 -2px; }
.cols { flex: 1; min-height: 0; display: flex; padding: 1px 0 0 1px; }
.treepane { width: 298px; flex: none; display: flex; flex-direction: column; min-height: 0; }
.filter { height: 15px; flex: none; padding-left: 4px; line-height: 13px; border: 1px solid #8ba7c5; background: #f0f0f0; }
.treebox { flex: 1; min-height: 0; margin-top: 3px; border: 1px solid #8ba7c5; border-bottom: 0; display: flex; flex-direction: column; }
.treehead { display: flex; align-items: center; height: 16px; flex: none; background: linear-gradient(#e2e8ef, #c6d0dc); color: #111; }
.treehead svg { width: 10px; height: 11px; }
.treehead b { margin-left: 6px; }
.clipper { flex: 1; min-height: 0; overflow: hidden; }
.tree { list-style: none; margin: 0; padding: 0; display: grid; grid-auto-rows: 1fr; height: 280px; }
.tree li { position: relative; display: flex; align-items: center; min-height: 0; white-space: nowrap; overflow: hidden; line-height: 11px; }
.tree .sel { background: #b5d9ff; }
.lv0 { padding-left: 49px; } .lv1 { padding-left: 65px; } .lv2 { padding-left: 80px; } .lv3 { padding-left: 106px; }
.rowclip { position: absolute; left: 0; top: 1px; width: 11px; height: 11px; }
.fold { width: 12px; height: 11px; flex: none; margin: 0 2px 0 1px; }
.leaf { width: 10px; height: 10px; flex: none; margin-right: 2px; }
.tog { position: relative; width: 7px; height: 7px; flex: none; border: 1px solid #999; background: linear-gradient(#222, #222) center / 3px 1px no-repeat, linear-gradient(#222, #222) center / 1px 3px no-repeat; }
.tog.open { background: linear-gradient(#222, #222) center / 3px 1px no-repeat; }
.dots { width: 6px; flex: none; display: flex; flex-direction: column; justify-content: flex-end; align-items: center; gap: 2px; border-right: 1px solid #8ba7c5; background: #f4f7fa; padding-bottom: 2px; }
.dots i { width: 2px; height: 2px; background: #8ba7c5; }
.detail { flex: 1; min-width: 0; display: flex; flex-direction: column; overflow: hidden; }
.tabs { display: flex; height: 18px; flex: none; border-bottom: 1px solid #8ba7c5; }
.tabs button { flex: none; padding: 0 6px; height: 18px; border: 1px solid #9fb3ca; border-bottom: 0; background: linear-gradient(#f1f4f8, #d2dbe6); }
.tabs .on { background: #fff; border-top: 2px solid #efaa3d; }
.tabs em { margin-left: 7px; color: #3aa54a; font: 8px/9px "DejaVu Sans", sans-serif; }
.steptools { display: flex; align-items: center; height: 30px; flex: none; gap: 8px; padding: 1px 0 0 9px; background: linear-gradient(#fff, #d9d9d9); }
.stepwrap { flex: 1; margin-left: 5px; border-left: 1px solid #888; }
.steps { width: 345px; table-layout: fixed; border-collapse: separate; border-spacing: 0; }
.s1 { width: 16px; } .s2 { width: 10px; } .s3 { width: 82px; } .s4 { width: 117px; } .s5 { width: 120px; }
.steps th { height: 16px; padding: 0; background: linear-gradient(#e2e8ef, #c6d0dc); border-right: 1px solid #a9b9cb; border-bottom: 1px solid #6c7c8e; color: #111; }
.steps td { padding: 1px 0 0; vertical-align: top; line-height: 11px; white-space: nowrap; border-right: 1px solid #b7c6dc; border-bottom: 1px solid #b7c6dc; }
.steps td:nth-child(3) { padding-left: 3px; }
.hclip { display: block; width: 9px; height: 12px; }
.first { height: 68px; background: #b5d9ff; }
.next { height: 133px; }
.next td:first-child { background: #c8cbd0; border-right-color: #888; }
.arrows { position: absolute; left: 0; top: 0; width: 100%; height: auto; pointer-events: none; }
.big { filter: drop-shadow(1px 4px 3px rgba(0, 0, 0, .5)); }
</style>
